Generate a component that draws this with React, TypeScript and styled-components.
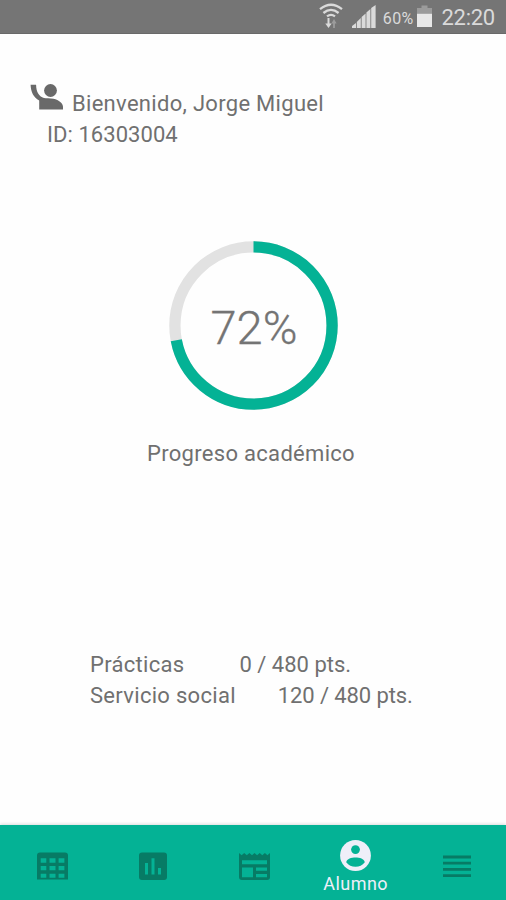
import React from "react";
import styled, { createGlobalStyle } from "styled-components";

const Global = createGlobalStyle`
  * { box-sizing: border-box; }
  html, body, #root { margin: 0; padding: 0; }
  body { background: #fefefe; font-family: Roboto, "Liberation Sans", sans-serif; }
  svg { display: block; flex: none; }
`;

const Screen = styled.div`
  width: 506px;
  height: 900px;
  display: flex;
  flex-direction: column;
  overflow: hidden;
  background: #fefefe;
  color: #707070;
`;

const StatusBar = styled.header`
  height: 34px;
  flex: none;
  display: flex;
  align-items: flex-start;
  justify-content: flex-end;
  padding-right: 11px;
  background: #757575;
  border-bottom: 1px solid #696969;
  color: #dadada;
`;

const SignalSlot = styled.span`
  margin-left: 9px;
`;

const Battery = styled.span`
  font-size: 16px;
  line-height: 20px;
  letter-spacing: 0.3px;
  margin: 9px 4px 0 7px;
`;

const Clock = styled.time`
  font-size: 22px;
  line-height: 26px;
  letter-spacing: -0.25px;
  margin: 5px 0 0 9px;
`;

const Main = styled.main`
  flex: 1;
  display: flex;
  flex-direction: column;
`;

const Line = styled.div<{ $spacing?: number }>`
  font-size: 22px;
  line-height: 31px;
  height: 31px;
  white-space: pre;
  letter-spacing: ${(p) => p.$spacing ?? 0.3}px;
`;

const Greeting = styled.section`
  padding: 49px 0 0 30px;
`;

const Welcome = styled.div`
  display: flex;
  gap: 8px;
  height: 36px;
  align-items: flex-start;

  ${Line} { margin-top: 5px; }
`;

const StudentId = styled(Line)`
  margin-left: 17px;
`;

const Progress = styled.section`
  margin-top: 89px;
  display: flex;
  flex-direction: column;
  align-items: center;
`;

const Dial = styled.div`
  display: grid;
  width: 172px;
  height: 172px;
  place-items: center;

  > * { grid-area: 1 / 1; }
`;

const Percent = styled.span`
  font-size: 47px;
  line-height: 56px;
  font-weight: 300;
  color: #747474;
  -webkit-text-stroke: 0.3px #747474;
  margin: 6px 0 0 2px;
`;

const Caption = styled(Line)`
  margin-top: 27px;
  margin-right: 4px;
`;

const Totals = styled.section`
  padding: 180px 0 0 90px;
`;

const TotalRow = styled.div<{ $gap: number }>`
  display: flex;
  gap: ${(p) => p.$gap}px;
`;

const Nav = styled.nav`
  height: 75px;
  flex: none;
  display: grid;
  grid-template-columns: repeat(5, 1fr);
  background: #04b295;
  color: #077b65;
  box-shadow: 0 -1px 3px rgba(0, 0, 0, 0.14);
`;

const Tab = styled.a<{ $active?: boolean }>`
  display: flex;
  flex-direction: column;
  align-items: center;
  padding-top: ${(p) => (p.$active ? 15 : 26)}px;
  padding-left: 3px;
  color: ${(p) => (p.$active ? "#efeff9" : "inherit")};
`;

const TabLabel = styled.span`
  font-size: 18px;
  line-height: 22px;
  letter-spacing: 0.45px;
  margin-top: 2px;
`;

const Wifi = () => (
  <svg width="24" height="34" viewBox="0 0 24 34" fill="none" stroke="#dadada" strokeWidth="2.3">
    <path d="M1 9.2Q12 .4 23 9.2M4.4 13Q12 6.8 19.6 13M8 16.4Q12 13.4 16 16.4" />
    <path d="M9.5 18v7" strokeWidth="2" />
    <path d="M6.3 23.5h6.4L9.5 28z" fill="#dadada" stroke="none" />
    <path d="M15 28v-6" stroke="#9c9c9c" strokeWidth="1.8" />
    <path d="M12.4 23.5h5.2L15 19z" fill="#9c9c9c" stroke="none" />
  </svg>
);

const Signal = () => (
  <svg width="24" height="34" viewBox="0 0 24 34" fill="#dadada">
    <path d="M0 28v-2l4-3v5zM4.8 28v-6l4-4v10zM9.6 28V17l4-3.6V28zM14.4 28V12.5l4-3.6V28zM19.2 28V8l4.4-3v23z" />
  </svg>
);

const BatteryIcon = () => (
  <svg width="15" height="34" viewBox="0 0 15 34">
    <path d="M0 8h4.5V5.5h6V8H15v6H0z" fill="#9b9b9b" />
    <path d="M0 13.8h15V27H0z" fill="#e8e8e8" />
  </svg>
);

const Waving = () => (
  <svg width="34" height="28" viewBox="0 0 34 28" fill="#696969">
    <circle cx="20.5" cy="7.5" r="6.4" />
    <path d="M.6 1.8H6.1C6.2 8.5 8.5 13.5 14 14.9C16 15.4 20 15 23.5 15.7C29 16.7 33 20.5 33 23.8V26.5H9.2V17.5C3.5 14.5.8 9 .6 1.8Z" />
  </svg>
);

const Ring = () => (
  <svg width="172" height="172" viewBox="0 0 172 172" fill="none" strokeWidth="11.3">
    <circle cx="86.5" cy="86.5" r="78.6" stroke="#e2e2e2" />
    <circle
      cx="86.5"
      cy="86.5"
      r="78.6"
      stroke="#04b295"
      pathLength="100"
      strokeDasharray="72 28"
      transform="rotate(-90 86.5 86.5)"
    />
  </svg>
);

const TableIcon = () => (
  <svg width="31" height="31" viewBox="0 0 31 31">
    <path d="M3 1.5h25a3 3 0 0 1 3 3V28.5H0v-24a3 3 0 0 1 3-3z" fill="#077b65" />
    <path
      d="M3.7 7.2h5.6v4.5H3.7zM12.5 7.2h6v4.5h-6zM21.6 7.2h5.8v4.5h-5.8zM3.7 15h5.6v4.2H3.7zM12.5 15h6v4.2h-6zM21.6 15h5.8v4.2h-5.8zM3.7 22.8h5.6v4H3.7zM12.5 22.8h6v4h-6zM21.6 22.8h5.8v4h-5.8z"
      fill="#04b295"
    />
  </svg>
);

const ChartIcon = () => (
  <svg width="28" height="31" viewBox="0 0 28 31">
    <rect y="1.5" width="28" height="27.5" rx="3" fill="#077b65" />
    <path d="M6 12h3v11.4H6zM12.5 7.3h3v16.1h-3zM19 17h3v6.4h-3z" fill="#04b295" />
  </svg>
);

const NewsIcon = () => (
  <svg width="31" height="31" viewBox="0 0 31 31">
    <path
      d="M0 2l2.6 2.2L5.2 2l2.6 2.2L10.4 2 13 4.2 15.5 2l2.6 2.2L20.7 2l2.6 2.2L25.9 2l2.5 2.2L31 2v24a3 3 0 0 1-3 3H3a3 3 0 0 1-3-3z"
      fill="#077b65"
    />
    <path
      d="M3 9.3h25v4H3zM3 16.5h11v9.8H3zM17 16.5h11v3.2H17zM17 23h11v3.3H17z"
      fill="#04b295"
    />
  </svg>
);

const AccountIcon = () => (
  <svg width="31" height="31" viewBox="0 0 31 31">
    <circle cx="15.5" cy="15.5" r="15.4" fill="#efeff9" />
    <circle cx="15.5" cy="9.6" r="4.4" fill="#04b295" />
    <path d="M6.2 22.3C6.8 18.8 11.5 17.5 15.5 17.5s8.7 1.3 9.3 4.8C22.5 25.3 19.2 26.8 15.5 26.8s-7-1.5-9.3-4.5z" fill="#04b295" />
  </svg>
);

const MenuIcon = () => (
  <svg width="28" height="31" viewBox="0 0 28 31" stroke="#077b65" strokeWidth="2.8">
    <path d="M0 6h28M0 12.2h28M0 18.4h28M0 24.6h28" />
  </svg>
);

export default function App() {
  return (
    <Screen>
      <Global />
      <StatusBar>
        <Wifi />
        <SignalSlot><Signal /></SignalSlot>
        <Battery>60%</Battery>
        <BatteryIcon />
        <Clock>22:20</Clock>
      </StatusBar>
      <Main>
        <Greeting>
          <Welcome>
            <Waving />
            <Line>Bienvenido, Jorge Miguel</Line>
          </Welcome>
          <StudentId $spacing={0.05}>ID: 16303004</StudentId>
        </Greeting>
        <Progress>
          <Dial>
            <Ring />
            <Percent>72%</Percent>
          </Dial>
          <Caption>Progreso académico</Caption>
        </Progress>
        <Totals>
          <TotalRow $gap={55}>
            <Line>Prácticas</Line>
            <Line $spacing={0}>0 / 480 pts.</Line>
          </TotalRow>
          <TotalRow $gap={42}>
            <Line>Servicio social</Line>
            <Line $spacing={-0.1}>120 / 480 pts.</Line>
          </TotalRow>
        </Totals>
      </Main>
      <Nav>
        <Tab><TableIcon /></Tab>
        <Tab><ChartIcon /></Tab>
        <Tab><NewsIcon /></Tab>
        <Tab $active>
          <AccountIcon />
          <TabLabel>Alumno</TabLabel>
        </Tab>
        <Tab><MenuIcon /></Tab>
      </Nav>
    </Screen>
  );
}
